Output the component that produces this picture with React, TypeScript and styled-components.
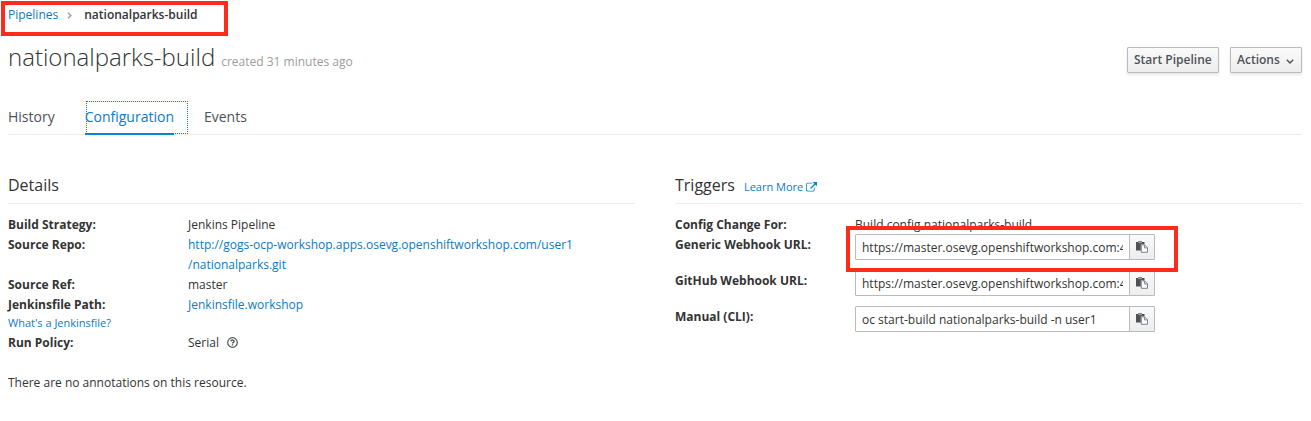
import React from 'react';
import styled, { createGlobalStyle } from 'styled-components';

const GlobalStyle = createGlobalStyle`
  * { box-sizing: border-box; }
  body {
    margin: 0;
    background: #fff;
    color: #333;
    font: 12px/20px "Open Sans", sans-serif;
  }
`;

const Page = styled.main`
  position: relative;
  height: 421px;
  padding: 5px 9px 0 8px;
  overflow: hidden;
`;

const Link = styled.a`
  color: #0a7bc8;
  text-decoration: none;
`;

const Breadcrumb = styled.nav`
  display: flex;
  align-items: center;
  height: 20px;
`;

const Separator = styled.svg`
  width: 5px;
  height: 7px;
  margin: 1px 12px 0 9px;
  fill: none;
  stroke: #9c9c9c;
  stroke-width: 1.3;
`;

const Current = styled.span`
  font-weight: 600;
`;

const Header = styled.header`
  display: flex;
  justify-content: space-between;
  align-items: flex-start;
  height: 76px;
  padding-top: 15px;
`;

const Title = styled.h1`
  margin: 0;
  font-size: 24px;
  font-weight: 300;
  line-height: 34px;
  white-space: nowrap;
`;

const Created = styled.small`
  margin-left: 6px;
  color: #9c9c9c;
  font-size: 12px;
  font-weight: 400;
`;

const Actions = styled.div`
  display: flex;
  gap: 11px;
  padding-top: 7px;
`;

const Button = styled.button<{ $width: number }>`
  display: flex;
  align-items: center;
  width: ${(p) => p.$width}px;
  height: 26px;
  padding: 0 6px;
  border: 1px solid #bbb;
  border-radius: 1px;
  background: linear-gradient(#fafafa, #ededed);
  box-shadow: 0 2px 3px rgba(3, 3, 3, 0.1);
  color: #4d5258;
  font: 600 12px/20px "Open Sans", sans-serif;
  white-space: nowrap;
`;

const Caret = styled.svg`
  width: 8px;
  height: 5px;
  margin: 3px 0 0 6px;
  fill: none;
  stroke: #4d5258;
  stroke-width: 1.4;
`;

const Tabs = styled.nav`
  display: flex;
  gap: 30px;
  height: 34px;
  border-bottom: 1px solid #ededec;
  font-size: 14px;
`;

const Tab = styled.a<{ $active?: boolean }>`
  position: relative;
  height: 34px;
  padding-top: 6px;
  color: ${(p) => (p.$active ? '#0a7bc8' : '#4d5258')};
  ${(p) => p.$active && 'border-bottom: 2px solid #0088ce;'}
`;

const FocusRing = styled.span`
  position: absolute;
  top: 0;
  left: 1px;
  right: -14px;
  height: 33px;
  border: 1px dotted #0088ce;
`;

const Columns = styled.div`
  display: grid;
  grid-template-columns: 1fr 1fr;
  gap: 40px;
  padding-top: 35px;
`;

const Heading = styled.h3`
  display: flex;
  align-items: baseline;
  gap: 9px;
  height: 34px;
  margin: 0 0 11px;
  padding-top: 5px;
  border-bottom: 1px solid #ededec;
  font-size: 16px;
  font-weight: 400;
`;

const LearnMore = styled(Link)`
  display: flex;
  align-items: center;
  gap: 3px;
  font-size: 11px;
`;

const ExternalIcon = styled.svg`
  width: 11px;
  height: 11px;
  fill: #0088ce;
`;

const List = styled.dl`
  margin: 0;
`;

const Row = styled.div<{ $height?: number }>`
  display: grid;
  grid-template-columns: 180px 1fr;
  height: ${(p) => p.$height ?? 20}px;
`;

const Term = styled.dt`
  font-weight: 700;
`;

const Value = styled.dd`
  margin: 0;
  white-space: nowrap;
`;

const Hint = styled(Link)`
  display: block;
  font-size: 11px;
  font-weight: 400;
  line-height: 16px;
`;

const HelpIcon = styled.svg`
  width: 11px;
  height: 11px;
  margin-left: 8px;
  vertical-align: -1px;
`;

const Note = styled.p`
  margin: 20px 0 0;
`;

const CopyGroup = styled.div`
  display: flex;
  width: 300px;
  height: 26px;
  margin-top: -1px;
`;

const CopyInput = styled.input`
  flex: 1;
  min-width: 0;
  height: 26px;
  padding: 0 6px;
  border: 1px solid #bbb;
  border-radius: 1px 0 0 1px;
  background: #fff;
  color: #333;
  font: 12px/20px "Open Sans", sans-serif;
`;

const CopyButton = styled.button`
  display: flex;
  align-items: center;
  justify-content: center;
  width: 26px;
  margin-left: -1px;
  padding: 0;
  border: 1px solid #bbb;
  border-radius: 0 1px 1px 0;
  background: linear-gradient(#fafafa, #ededed);
`;

const PasteIcon = styled.svg`
  width: 12px;
  height: 12px;
`;

const Highlight = styled.div<{ $x: number; $y: number; $w: number; $h: number }>`
  position: absolute;
  left: ${(p) => p.$x}px;
  top: ${(p) => p.$y}px;
  width: ${(p) => p.$w}px;
  height: ${(p) => p.$h}px;
  border: 4px solid #ff2b1a;
  pointer-events: none;
`;

function CopyField({ value }: { value: string }) {
  return (
    <CopyGroup>
      <CopyInput readOnly value={value} />
      <CopyButton aria-label="Copy">
        <PasteIcon viewBox="0 0 12 12">
          <path fill="#4d5258" d="M0 1h2.3V.3h3.6V1h2.6v2.2H4.8V9.6H0z" />
          <path fill="#9fa2a5" d="M2.4.9h3.5v1.3H2.4z" />
          <path fill="#fff" stroke="#72767b" strokeWidth=".9" d="M5.3 3.8h3.2l3 3v4.5H5.3z" />
          <path fill="none" stroke="#72767b" strokeWidth=".9" d="M8.4 3.9v3h3" />
        </PasteIcon>
      </CopyButton>
    </CopyGroup>
  );
}

export default function App() {
  return (
    <>
      <GlobalStyle />
      <Page>
        <Breadcrumb>
          <Link>Pipelines</Link>
          <Separator viewBox="0 0 5 7"><path d="M1 .7 4 3.5 1 6.3" /></Separator>
          <Current>nationalparks-build</Current>
        </Breadcrumb>
        <Header>
          <Title>nationalparks-build<Created>created 31 minutes ago</Created></Title>
          <Actions>
            <Button $width={92}>Start Pipeline</Button>
            <Button $width={72}>
              Actions
              <Caret viewBox="0 0 8 5"><path d="M.8.8 4 4 7.2.8" /></Caret>
            </Button>
          </Actions>
        </Header>
        <Tabs>
          <Tab>History</Tab>
          <Tab $active>Configuration<FocusRing /></Tab>
          <Tab>Events</Tab>
        </Tabs>
        <Columns>
          <section>
            <Heading>Details</Heading>
            <List>
              <Row><Term>Build Strategy:</Term><Value>Jenkins Pipeline</Value></Row>
              <Row $height={40}>
                <Term>Source Repo:</Term>
                <Value><Link>http://gogs-ocp-workshop.apps.osevg.openshiftworkshop.com/user1<br />/nationalparks.git</Link></Value>
              </Row>
              <Row><Term>Source Ref:</Term><Value>master</Value></Row>
              <Row $height={38}>
                <Term>Jenkinsfile Path:<Hint>What's a Jenkinsfile?</Hint></Term>
                <Value><Link>Jenkinsfile.workshop</Link></Value>
              </Row>
              <Row>
                <Term>Run Policy:</Term>
                <Value>
                  Serial
                  <HelpIcon viewBox="0 0 11 11">
                    <circle cx="5.5" cy="5.5" r="4.8" fill="none" stroke="#4d5258" strokeWidth="1.2" />
                    <path d="M3.8 4.3C4 2.6 7.2 2.7 7.1 4.4 7 5.4 5.6 5.3 5.5 6.5M5.5 7.2v1.4" fill="none" stroke="#4d5258" strokeWidth="1.4" />
                  </HelpIcon>
                </Value>
              </Row>
            </List>
            <Note>There are no annotations on this resource.</Note>
          </section>
          <section>
            <Heading>
              Triggers
              <LearnMore>
                Learn More
                <ExternalIcon viewBox="0 0 1792 1792">
                  <path d="M1408 928v320q0 119-84.5 203.5t-203.5 84.5h-832q-119 0-203.5-84.5t-84.5-203.5v-832q0-119 84.5-203.5t203.5-84.5h704q14 0 23 9t9 23v64q0 14-9 23t-23 9h-704q-66 0-113 47t-47 113v832q0 66 47 113t113 47h832q66 0 113-47t47-113v-320q0-14 9-23t23-9h64q14 0 23 9t9 23zm384-864v512q0 26-19 45t-45 19-45-19l-176-176-652 652q-10 10-23 10t-23-10l-114-114q-10-10-10-23t10-23l652-652-176-176q-19-19-19-45t19-45 45-19h512q26 0 45 19t19 45z" />
                </ExternalIcon>
              </LearnMore>
            </Heading>
            <List>
              <Row><Term>Config Change For:</Term><Value>Build config nationalparks-build</Value></Row>
              <Row $height={36}>
                <Term>Generic Webhook URL:</Term>
                <Value><CopyField value="https://master.osevg.openshiftworkshop.com:443" /></Value>
              </Row>
              <Row $height={36}>
                <Term>GitHub Webhook URL:</Term>
                <Value><CopyField value="https://master.osevg.openshiftworkshop.com:443" /></Value>
              </Row>
              <Row $height={36}>
                <Term>Manual (CLI):</Term>
                <Value><CopyField value="oc start-build nationalparks-build -n user1" /></Value>
              </Row>
            </List>
          </section>
        </Columns>
        <Highlight $x={1} $y={1} $w={227} $h={35} />
        <Highlight $x={846} $y={226} $w={332} $h={46} />
      </Page>
    </>
  );
}
